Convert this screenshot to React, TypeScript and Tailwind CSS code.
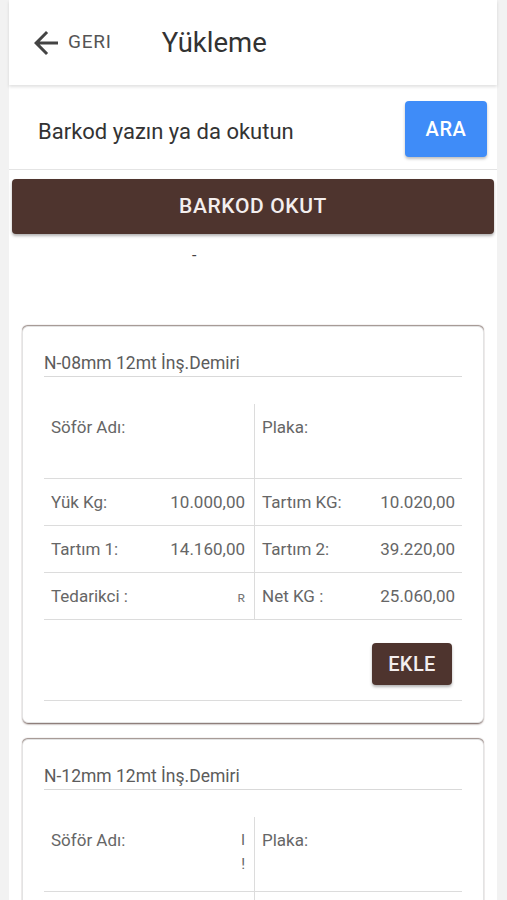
import React from "react";

type Row = { l: string; lv?: React.ReactNode; r: string; rv?: string };

const ROWS_1: Row[] = [
  { l: "Yük Kg:", lv: "10.000,00", r: "Tartım KG:", rv: "10.020,00" },
  { l: "Tartım 1:", lv: "14.160,00", r: "Tartım 2:", rv: "39.220,00" },
  { l: "Tedarikci :", lv: <span className="text-[14px] text-[#777]">ʀ</span>, r: "Net KG :", rv: "25.060,00" },
];

function BackIcon() {
  return (
    <svg viewBox="0 0 24 24" className="h-9 w-9 fill-[#444]">
      <path d="M20 11H7.83l5.59-5.59L12 4l-8 8 8 8 1.41-1.41L7.83 13H20v-2z" />
    </svg>
  );
}

function Card({
  title,
  driver,
  rows,
}: {
  title: string;
  driver?: React.ReactNode;
  rows: Row[];
}) {
  return (
    <div className="rounded-[6px] border border-[#e3e3e3] bg-white px-[21px] pb-[21px] pt-[24px] shadow-[0_2px_2px_-1px_rgba(78,52,46,0.85),0_-1px_1px_-0.5px_rgba(78,52,46,0.55)]">
      <div className="h-[26px] border-b border-[#d9d9d9] text-[17.5px] leading-[24px] text-[#5c5c5c]">
        {title}
      </div>

      <div className="mt-[27px] grid grid-cols-[210px_1fr] text-[17px] leading-[24px] text-[#666]">
        <div className="flex h-[75px] justify-between border-b border-[#dcdcdc] pl-[7px] pr-[9px] pt-[11px]">
          <span>Söför Adı:</span>
          {driver}
        </div>
        <div className="h-[75px] border-b border-l border-[#dcdcdc] pl-[7px] pt-[11px]">
          Plaka:
        </div>
        {rows.map((r) => (
          <React.Fragment key={r.l}>
            <div className="flex h-[47px] items-center justify-between border-b border-[#dcdcdc] pl-[7px] pr-[9px]">
              <span>{r.l}</span>
              <span>{r.lv}</span>
            </div>
            <div className="flex h-[47px] items-center justify-between border-b border-l border-[#dcdcdc] pl-[7px] pr-[7px]">
              <span>{r.r}</span>
              <span>{r.rv}</span>
            </div>
          </React.Fragment>
        ))}
      </div>

      <div className="mt-[23px] flex justify-end pr-[10px]">
        <button className="h-[42px] w-[80px] rounded-[4px] bg-[#4e342e] text-[20px] font-medium tracking-[0.02em] text-[#f3eeee] shadow-[0_2px_3px_rgba(0,0,0,0.3)]">
          EKLE
        </button>
      </div>
      <div className="mt-[15px] border-t border-[#dcdcdc]" />
    </div>
  );
}

export default function App() {
  return (
    <div className="min-h-screen bg-[#f2f2f2] font-['Roboto',sans-serif]">
      <div className="ml-[9px] min-h-screen w-[488px] bg-white">
        <header className="relative z-10 flex h-[85px] items-center bg-white pl-[19px] shadow-[0_2px_3px_rgba(0,0,0,0.12)]">
          <BackIcon />
          <span className="ml-[4px] text-[19px] tracking-[0.04em] text-[#555]">GERI</span>
          <h1 className="ml-[50px] text-[27.5px] text-[#333]">Yükleme</h1>
        </header>

        <div className="mt-[3px] flex h-[82px] items-center justify-between border-b border-[#e4e4e4] pl-[29px] pr-[10px]">
          <span className="pt-[6px] text-[22px] text-[#333]">Barkod yazın ya da okutun</span>
          <button className="h-[56px] w-[82px] rounded-[4px] bg-[#3f8cf8] text-[20px] font-medium tracking-[0.03em] text-white shadow-[0_2px_3px_rgba(0,0,0,0.25)]">
            ARA
          </button>
        </div>

        <div className="mx-[3px] mt-[9px]">
          <button className="h-[55px] w-full rounded-[4px] bg-[#4e342e] text-[21px] font-medium tracking-[0.03em] text-[#f3eeee] shadow-[0_2px_3px_rgba(0,0,0,0.3)]">
            BARKOD OKUT
          </button>
        </div>

        <div className="mt-[12px] h-[20px] pl-[183px] text-[16px] leading-[20px] text-[#444]">-</div>

        <div className="mx-[13px] mt-[60px] flex flex-col gap-[16px] pb-[20px]">
          <Card title="N-08mm 12mt İnş.Demiri" rows={ROWS_1} />
          <Card
            title="N-12mm 12mt İnş.Demiri"
            driver={
              <span className="flex flex-col items-end text-[15px] leading-[24px]">
                <span>I</span>
                <span>!</span>
              </span>
            }
            rows={[
              { l: "Yük Kg:", r: "Tartım KG:" },
              { l: "Tartım 1:", r: "Tartım 2:" },
              { l: "Tedarikci :", r: "Net KG :" },
            ]}
          />
        </div>
      </div>
    </div>
  );
}
